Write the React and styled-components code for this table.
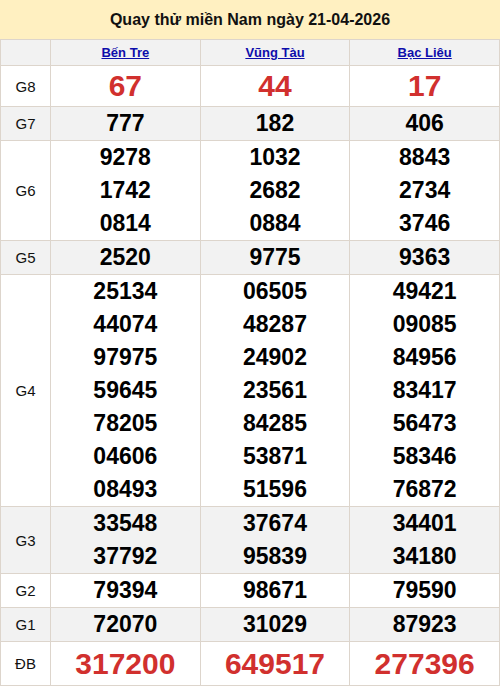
import React from "react";
import styled, { createGlobalStyle } from "styled-components";

const Global = createGlobalStyle`
  body {
    margin: 0;
    background: #fff;
    font-family: "Liberation Sans", Arial, sans-serif;
  }
`;

const provinces = ["Bến Tre", "Vũng Tàu", "Bạc Liêu"];

const prizes = [
  { name: "G8", big: true, cols: [["67"], ["44"], ["17"]] },
  { name: "G7", cols: [["777"], ["182"], ["406"]] },
  {
    name: "G6",
    cols: [
      ["9278", "1742", "0814"],
      ["1032", "2682", "0884"],
      ["8843", "2734", "3746"],
    ],
  },
  { name: "G5", cols: [["2520"], ["9775"], ["9363"]] },
  {
    name: "G4",
    cols: [
      ["25134", "44074", "97975", "59645", "78205", "04606", "08493"],
      ["06505", "48287", "24902", "23561", "84285", "53871", "51596"],
      ["49421", "09085", "84956", "83417", "56473", "58346", "76872"],
    ],
  },
  {
    name: "G3",
    cols: [
      ["33548", "37792"],
      ["37674", "95839"],
      ["34401", "34180"],
    ],
  },
  { name: "G2", cols: [["79394"], ["98671"], ["79590"]] },
  { name: "G1", cols: [["72070"], ["31029"], ["87923"]] },
  { name: "ĐB", big: true, special: true, cols: [["317200"], ["649517"], ["277396"]] },
];

const App = () => {
  return (
    <>
      <Global />
      <Wrap>
        <Title>Quay thử miền Nam ngày 21-04-2026</Title>
        <Table>
          <thead>
            <HeadRow>
              <HeadCell />
              {provinces.map((p) => (
                <HeadCell key={p}>
                  <ProvLink href="#">{p}</ProvLink>
                </HeadCell>
              ))}
            </HeadRow>
          </thead>
          <tbody>
            {prizes.map((row, i) => (
              <Row key={row.name} $alt={i % 2 === 1}>
                <Label>{row.name}</Label>
                {row.cols.map((nums, c) => (
                  <Cell key={c}>
                    {nums.map((n) => (
                      <Num key={n} $big={row.big} $special={row.special}>
                        {n}
                      </Num>
                    ))}
                  </Cell>
                ))}
              </Row>
            ))}
          </tbody>
        </Table>
      </Wrap>
    </>
  );
};

export default App;

const Wrap = styled.div`
  width: 500px;
`;

const Title = styled.div`
  height: 39px;
  display: flex;
  align-items: center;
  justify-content: center;
  background: #fff0c1;
  color: #111;
  font-size: 16px;
  font-weight: bold;
`;

const Table = styled.table`
  width: 500px;
  border-collapse: collapse;
  table-layout: fixed;
  border: 1px solid #ddd5cc;
  td,
  th {
    border: 1px solid #ddd5cc;
    padding: 0;
    text-align: center;
  }
  td:first-child,
  th:first-child {
    width: 49px;
  }
`;

const HeadRow = styled.tr`
  height: 26px;
  background: #f2f2f2;
`;

const HeadCell = styled.th`
  font-size: 13px;
  font-weight: bold;
`;

const ProvLink = styled.a`
  color: #0d0dab;
  text-decoration: underline;
`;

const Row = styled.tr`
  background: ${(p) => (p.$alt ? "#f2f2f2" : "#fff")};
`;

const Label = styled.td`
  font-size: 15px;
  color: #111;
`;

const Cell = styled.td`
  vertical-align: middle;
`;

const Num = styled.div`
  height: ${(p) => (p.$big ? (p.$special ? "43px" : "40px") : "33px")};
  line-height: ${(p) => (p.$big ? (p.$special ? "43px" : "40px") : "33px")};
  font-size: ${(p) => (p.$big ? "30px" : "23px")};
  font-weight: bold;
  color: ${(p) => (p.$big ? "#d1302e" : "#000")};
`;
